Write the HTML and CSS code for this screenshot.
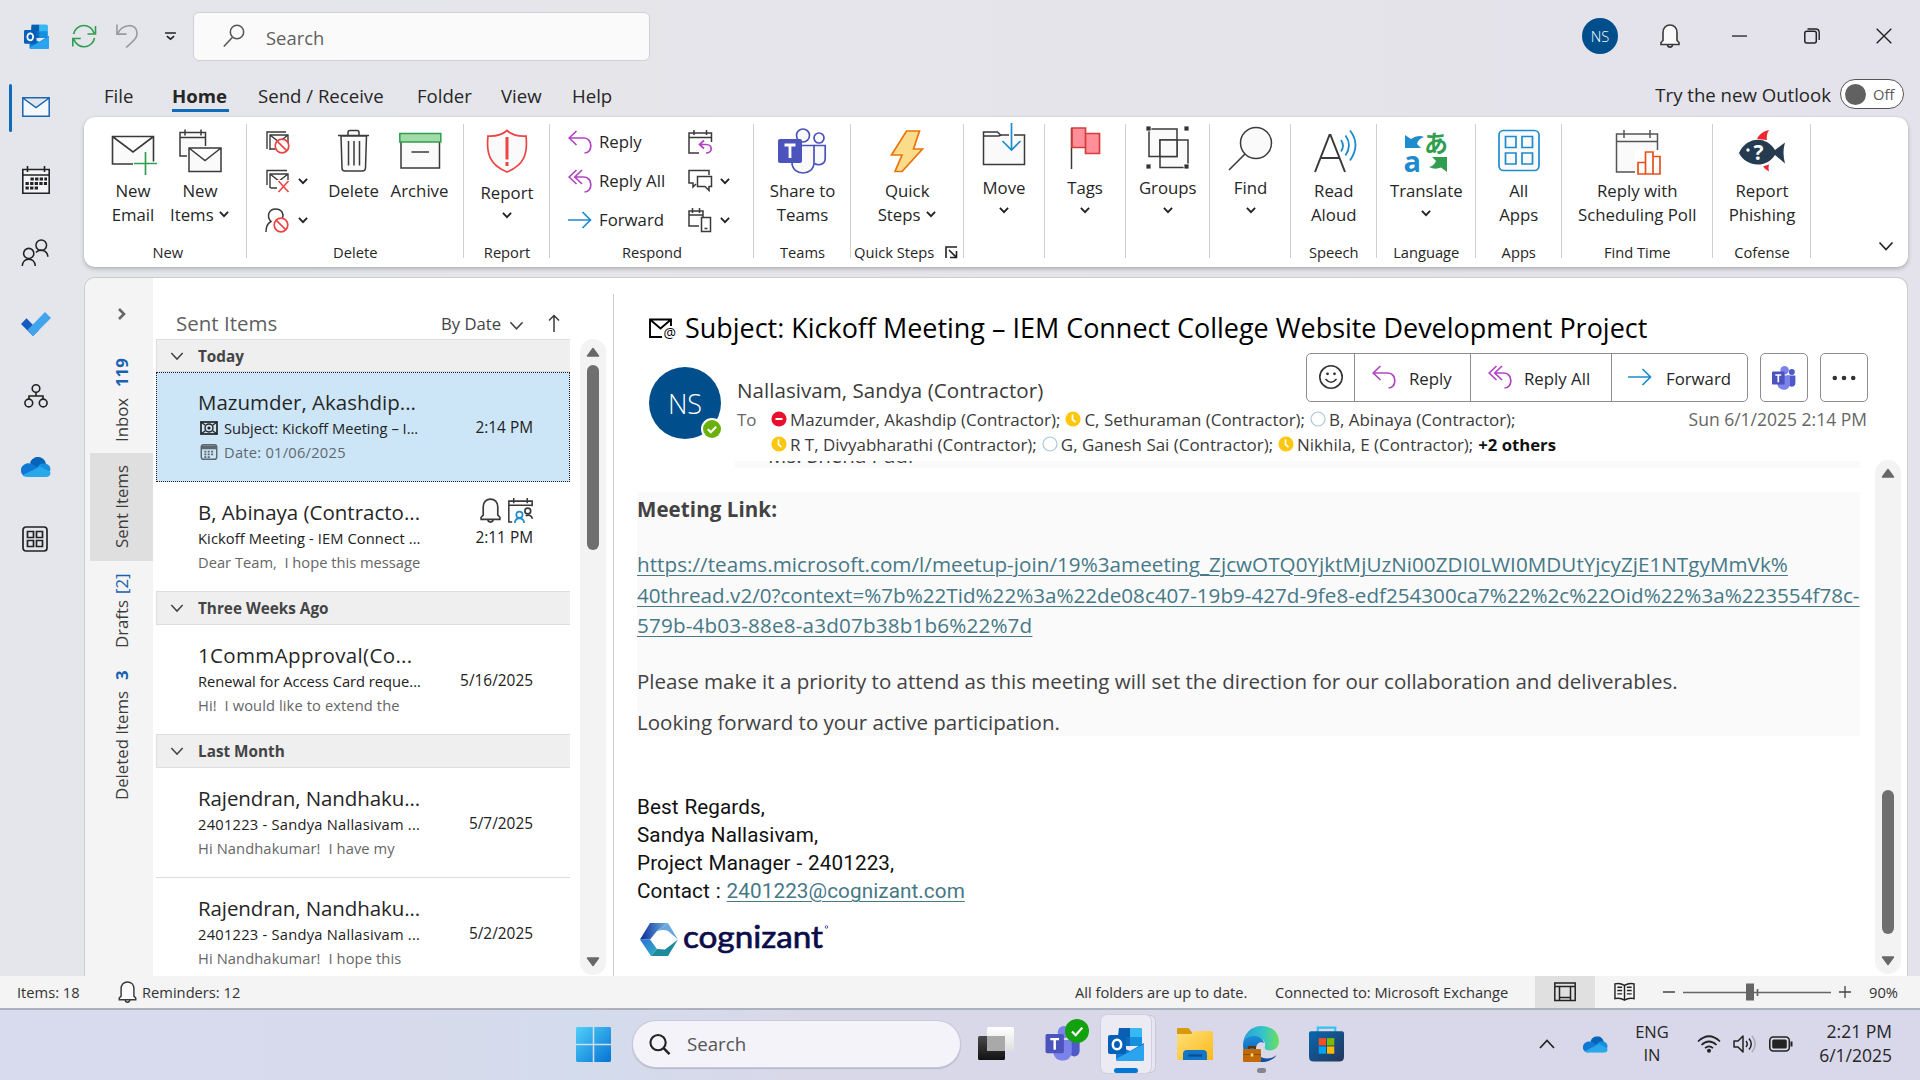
FILE: index.html
```html
<!DOCTYPE html>
<html lang="en">
<head>
<meta charset="utf-8">
<title>Sent Items - Outlook</title>
<link rel="stylesheet" href="styles.css">
</head>
<body>
<svg class="defs" aria-hidden="true">
  <defs>
    <linearGradient id="edgeTop" x1="0" y1="0" x2="1" y2="0"><stop offset="0" stop-color="#2a9fdd"/><stop offset=".55" stop-color="#34c4c9"/><stop offset="1" stop-color="#6be05a"/></linearGradient>
    <linearGradient id="edgeLow" x1="0" y1="0" x2="0" y2="1"><stop offset="0" stop-color="#1b8fdc"/><stop offset="1" stop-color="#114a9c"/></linearGradient>
    <linearGradient id="winGrad" x1="0" y1="0" x2="1" y2="1"><stop offset="0" stop-color="#50d0fb"/><stop offset="1" stop-color="#0573d3"/></linearGradient>
    <linearGradient id="folderGrad" x1="0" y1="0" x2="1" y2="1"><stop offset="0" stop-color="#ffe07a"/><stop offset="1" stop-color="#fbb91a"/></linearGradient>
    <linearGradient id="storeGrad" x1="0" y1="0" x2="1" y2="1"><stop offset="0" stop-color="#0768b0"/><stop offset="1" stop-color="#26355a"/></linearGradient>
    <linearGradient id="darkGrad" x1="0" y1="0" x2="0" y2="1"><stop offset="0" stop-color="#4a4a4a"/><stop offset="1" stop-color="#111"/></linearGradient>
    <linearGradient id="lightGrad" x1="0" y1="0" x2="0" y2="1"><stop offset="0" stop-color="#fff"/><stop offset="1" stop-color="#dedede"/></linearGradient>
    <linearGradient id="cogA" x1="0" y1="0" x2="1" y2="0"><stop offset="0" stop-color="#0a2a94"/><stop offset="1" stop-color="#6fb6e6"/></linearGradient>
    <linearGradient id="cogB" x1="0" y1="0" x2="1" y2="1"><stop offset="0" stop-color="#2b6fd6"/><stop offset="1" stop-color="#2fb3c4"/></linearGradient>
    <symbol id="chev" viewBox="0 0 10 10"><path d="M1.6 3.2 5 6.800 8.400 3.200" fill="none" stroke="currentColor" stroke-width="1.550"/></symbol>
    <symbol id="chevThin" viewBox="0 0 16 16"><path d="M1.500 4.500 8 11.500 14.500 4.500" fill="none" stroke="currentColor" stroke-width="1.700"/></symbol>
    <symbol id="bell" viewBox="0 0 24 24"><path d="M3 20.500V18.500L5 16.500V8.500C5 4 8 1 12 1s7 3 7 7.500v8l2 2v2zM9.500 20.500c0 3.500 5 3.500 5 0" fill="#fafafa" stroke="#3a3a3a" stroke-width="1.600"/></symbol>
    <symbol id="reply" viewBox="0 0 24 24"><path d="M8.500 1 1.200 8l7.300 7M1.200 8H16c9 0 9 15 .5 15" fill="none" stroke="#b146c2" stroke-width="1.700"/></symbol>
    <symbol id="replyAll" viewBox="0 0 24 24"><path d="M8.500 1 1.200 8l7.300 7M14 1 6.800 8l7.200 7M7 8h9c9 0 9 15 .5 15" fill="none" stroke="#b146c2" stroke-width="1.700"/></symbol>
    <symbol id="forward" viewBox="0 0 24 24"><path d="M0 12h22.500M14.500 4l8 8-8 8" fill="none" stroke="#1e8bcd" stroke-width="1.700"/></symbol>
    <symbol id="outlook" viewBox="0 0 36 34"><path d="M11 1h21q2 0 2 2v16H10z" fill="#28a8ea"/><path d="M11 1h11v9H10z" fill="#0a5fb0"/><path d="M22 1h10q2 0 2 2v7H22z" fill="#36b9f2"/><path d="M22 10h12v9H22z" fill="#1490df"/><path d="M10 10h12v9H10z" fill="#0f6cbd"/><path d="M8 18l14 6 14-8v16q0 2-2 2H10q-2 0-2-2z" fill="#1079d4"/><path d="M8 32 36 17v15q0 2-2 2H10q-2 0-2-2z" fill="#2aa4ee"/><rect y="8" width="18" height="19" rx="2" fill="#0560b8"/><ellipse cx="9" cy="17.500" rx="4.200" ry="4.800" fill="none" stroke="#fff" stroke-width="2.500"/></symbol>
    <symbol id="cloud" viewBox="0 0 30 20"><path d="M9 6c3-8 14-8 16 1l-8 6z" fill="#0364b8"/><path d="M1 17C-3 11 4 4 11 7l10 6-15 6.500Q2.500 20 1 17z" fill="#0f78d4"/><path d="M18 8c7-4 13 1 11 6l-4 4-10-6z" fill="#1490df"/><path d="M2 18 19 9.500l10 5c1.500 3-1 5.500-4 5.500H7q-3 0-5-2z" fill="#28a8ea"/></symbol>
    <symbol id="teams" viewBox="0 0 40 40"><circle cx="33" cy="10" r="5" fill="#5059c9"/><circle cx="21" cy="7" r="7" fill="#7b83eb"/><path d="M24 16h15v12c0 9-12 9-12 0z" fill="#5059c9"/><path d="M9 16h21v13c0 14-21 14-21 0z" fill="#7b83eb"/><rect x="0" y="9" width="21" height="22" rx="2" fill="#4b53bc"/><path d="M5.500 15h10M10.500 15v12" stroke="#fff" stroke-width="2.800"/></symbol>
    <symbol id="ban" viewBox="0 0 16 16"><circle cx="8" cy="8" r="6.800" fill="#fff" stroke="#ee4444" stroke-width="1.700"/><path d="M3.300 3.300l9.400 9.400" stroke="#ee4444" stroke-width="1.700"/></symbol>
    <symbol id="away" viewBox="0 0 16 16"><circle cx="8" cy="8" r="7.600" fill="#fdc70f"/><path d="M7.500 3.500v5.200l3 2.300" fill="none" stroke="#fff" stroke-width="1.700"/></symbol>
    <symbol id="offline" viewBox="0 0 16 16"><circle cx="8" cy="8" r="7" fill="#fff" stroke="#a9c8d8" stroke-width="1.200"/></symbol>
  </defs>
</svg>

<header class="titlebar">
  <svg class="i-outlook" viewBox="0 0 36 34" preserveAspectRatio="none"><use href="#outlook"/></svg>
  <svg class="i-sync" viewBox="0 0 24 24"><path d="M1.500 10A10.600 10.600 0 0 1 22 9M22.500 14A10.600 10.600 0 0 1 2 15.500M23.500 2v8h-8M.800 22.500V14.500h8" fill="none" stroke="#2f9e4f" stroke-width="1.600"/></svg>
  <svg class="i-undo" viewBox="0 0 24 24"><path d="M1 0v10h10M1.500 10C6-1 22-2 22 9c0 6-5 9-11.500 15" fill="none" stroke="#9a9a9e" stroke-width="1.700"/></svg>
  <svg class="i-more" viewBox="0 0 12 10"><path d="M0 1h12M2 4.500 6 8l4-3.500" fill="none" stroke="#222" stroke-width="1.700"/></svg>
  <div class="search">
    <svg width="22" height="24" viewBox="0 0 22 24"><circle cx="14" cy="8" r="6.700" fill="none" stroke="#555" stroke-width="1.500"/><path d="M9.500 13.200.800 22.500" stroke="#555" stroke-width="1.500"/></svg>
    <span>Search</span>
  </div>
  <div class="me">NS</div>
  <svg class="i-bell" viewBox="0 0 24 24"><use href="#bell"/></svg>
  <svg class="i-min" viewBox="0 0 16 16"><path d="M0 7.500h16" stroke="#222" stroke-width="1.400"/></svg>
  <svg class="i-max" viewBox="0 0 16 16"><rect x=".8" y="3.300" width="11.500" height="11.700" rx="2" fill="none" stroke="#222" stroke-width="1.500"/><path d="M3.500 1h8q3.700 0 3.700 3.700V12" fill="none" stroke="#222" stroke-width="1.400"/></svg>
  <svg class="i-close" viewBox="0 0 16 16"><path d="M.700.700l14.600 14.600M15.300.700.700 15.300" stroke="#222" stroke-width="1.400"/></svg>
</header>

<div class="window">
  <nav class="rail">
    <div class="rail-mark"></div>
    <svg class="r1" viewBox="0 0 28 20"><path d="M.800.800h26.400v18.400H.800zM.800 1l13.200 9.500L27.200 1" fill="#f4f8fc" stroke="#1a66b0" stroke-width="1.500"/></svg>
    <svg class="r2" viewBox="0 0 28 28"><path d="M.800 3.500h26.400v23.700H.800zM.800 9h26.400M5.500 0v6M22.500 0v6" fill="#f4f4f6" stroke="#222" stroke-width="1.600"/><path d="M8.500 13h16.500M3.500 17.500h21.500M3.500 22h13" stroke="#222" stroke-width="3" stroke-dasharray="3.300 1.300"/></svg>
    <svg class="r3" viewBox="0 0 28 28"><g fill="none" stroke="#222" stroke-width="1.600"><circle cx="20.500" cy="6.500" r="5.500"/><circle cx="7.500" cy="15" r="5.300"/><path d="M.800 28c.5-9.500 13-9.500 13.500 0M15 14c4-4.500 12-2.500 12.300 4.500"/></g></svg>
    <svg class="r4" viewBox="0 0 30 24"><path d="M0 12 5.500 6.200 12 13 18 18 12 24z" fill="#185abd"/><path d="M12 24 6.500 18 24 0l6 6z" fill="#41a5ee"/></svg>
    <svg class="r5" viewBox="0 0 24 24"><g fill="none" stroke="#222" stroke-width="1.600"><circle cx="12" cy="4.500" r="3.800"/><circle cx="4.800" cy="19" r="3.900"/><circle cx="19.200" cy="19" r="3.900"/><path d="M12 8.500V12M5 15v-3h14v3"/></g></svg>
    <svg class="r6" viewBox="0 0 30 20"><use href="#cloud"/></svg>
    <svg class="r7" viewBox="0 0 26 26"><g fill="none" stroke="#222" stroke-width="1.700"><rect x="1" y="1" width="24" height="24" rx="3"/><path d="M5.500 5.500h6v6h-6zM14.500 5.500h6v6h-6zM5.500 14.500h6v6h-6zM14.500 14.500h6v6h-6z"/></g></svg>
  </nav>

  <div class="content">
    <div class="tabs">
      <span class="tab t-file">File</span><span class="tab t-home">Home</span><span class="tab t-send">Send / Receive</span><span class="tab t-folder">Folder</span><span class="tab t-view">View</span><span class="tab t-help">Help</span>
      <span class="try">Try the new Outlook</span>
      <span class="toggle"><i></i>Off</span>
    </div>

    <section class="ribbon">
      <div class="group g-new">
        <div class="tools">
          <div class="btn"><svg viewBox="0 0 48 48"><path d="M3.500 10.500h41v27.500h-41zM3.500 10.500 24 26 44.500 10.500" fill="#fafafa" stroke="#3a3a3a" stroke-width="1.600"/><path d="M24 38h24M37 27v10" stroke="#fff" stroke-width="5"/><path d="M25 37.500h23M36.500 26v23" stroke="#2f9e4f" stroke-width="1.700"/></svg><b>New<br>Email</b></div>
          <div class="btn"><svg viewBox="0 0 48 48"><path d="M4 6.500h25.500V30H4zM4 11.500h25.500M9 3.500v6M25 3.500v6" fill="#fafafa" stroke="#3a3a3a" stroke-width="1.500"/><path d="M11 20h34v26H11z" fill="#fff"/><path d="M13 22h32v23.500H13zM13 22l16 12.500L45 22" fill="#fafafa" stroke="#3a3a3a" stroke-width="1.500"/></svg><b>New<br>Items <svg class="ch"><use href="#chev"/></svg></b></div>
        </div>
        <label>New</label>
      </div>
      <div class="group g-delete">
        <div class="tools">
          <div class="rows">
            <div><svg viewBox="0 0 24 24"><path d="M2 19V2h19M5 20V5h18v14H5.500M5 5l9 7 9-7" fill="none" stroke="#3a3a3a" stroke-width="1.400"/><use href="#ban" x="9" y="8" width="16" height="16"/></svg></div>
            <div><svg viewBox="0 0 24 24"><path d="M2 16V1.500h20M5 19V5h18v14H5.500M5 5l9 7 9-7" fill="none" stroke="#3a3a3a" stroke-width="1.400"/><path d="M12 11h12v13H12z" fill="#fff"/><path d="M13.500 12l10 11M23.500 12l-10 11" stroke="#ee4444" stroke-width="1.600"/></svg><svg class="ch"><use href="#chev"/></svg></div>
            <div><svg viewBox="0 0 24 24"><path d="M1 24c0-7 2-9 5-10.500C1 8 4 1 10.500 1S19 6 17.500 10" fill="none" stroke="#3a3a3a" stroke-width="1.500"/><use href="#ban" x="8" y="9" width="16" height="16"/></svg><svg class="ch"><use href="#chev"/></svg></div>
          </div>
          <div class="btn"><svg viewBox="0 0 48 48"><path d="M11 10h25.500l-1 32q-.2 3-3 3h-17.500q-3 0-3-3zM8 9.500h31M18 9V6.500q0-2 2-2h7q2 0 2 2V9M18.500 15v24.500M24 15v24.500M29.500 15v24.500" fill="#fafafa" stroke="#3a3a3a" stroke-width="1.500"/></svg><b>Delete</b></div>
          <div class="btn"><svg viewBox="0 0 48 48"><path d="M5 15h38.500v27H5z" fill="#fafafa" stroke="#3a3a3a" stroke-width="1.500"/><path d="M3.800 7.500h41v8.500h-41z" fill="#a0dba8" stroke="#2f9e4f" stroke-width="1.500"/><path d="M15.500 26h17.500" stroke="#3a3a3a" stroke-width="1.500"/></svg><b>Archive</b></div>
        </div>
        <label>Delete</label>
      </div>
      <div class="group g-report">
        <div class="tools"><div class="btn low"><svg viewBox="0 0 48 48"><path d="M24 2.500c5 4.500 11 6 19 5.500C45 26 41 37 24 44 7 37 3 26 5 8c8 .5 14-1 19-5.500z" fill="#fafafa" stroke="#ee4444" stroke-width="1.700"/><path d="M24 9v22.500M24 34v4" stroke="#ee4444" stroke-width="3"/></svg><b>Report</b><svg class="ch"><use href="#chev"/></svg></div></div>
        <label>Report</label>
      </div>
      <div class="group g-respond">
        <div class="tools">
          <div class="rows named">
            <div><svg><use href="#reply"/></svg>Reply</div>
            <div><svg><use href="#replyAll"/></svg>Reply All</div>
            <div><svg><use href="#forward"/></svg>Forward</div>
          </div>
          <div class="rows">
            <div><svg viewBox="0 0 24 24"><path d="M11 23H1V3h22.500v9M1 7.500h22.500M6 0v5M18.500 0v5" fill="none" stroke="#3a3a3a" stroke-width="1.500"/><path d="M16 10.500 11.500 14.500l4.500 4M12 14.500h6c7 0 7 8.500 0 8.500" fill="none" stroke="#b146c2" stroke-width="1.700"/></svg></div>
            <div><svg viewBox="0 0 24 24"><path d="M8 15 5 18v-4H1V1.500h20V6M9.500 7.500H23.500v10H21v4l-4-4H9.500z" fill="none" stroke="#3a3a3a" stroke-width="1.500"/></svg><svg class="ch"><use href="#chev"/></svg></div>
            <div><svg viewBox="0 0 24 24"><path d="M11 18H1V3h14v6M1 7h14M4.500 0v5M11.500 0v5" fill="none" stroke="#3a3a3a" stroke-width="1.500"/><rect x="13.500" y="9.500" width="9" height="14" fill="#fff" stroke="#3a3a3a" stroke-width="1.500"/><path d="M16.500 20.500h3" stroke="#3a3a3a" stroke-width="1.500"/></svg><svg class="ch"><use href="#chev"/></svg></div>
          </div>
        </div>
        <label>Respond</label>
      </div>
      <div class="group g-teams">
        <div class="tools"><div class="btn"><svg viewBox="0 0 48 48"><g fill="#fafafa" stroke="#4b53bc" stroke-width="1.700"><circle cx="25" cy="9.500" r="6.500"/><circle cx="41" cy="12" r="5"/><path d="M36 19.500h11.200v13c0 7-8 7-10.500 5"/><path d="M14 19.500h22v17c0 14-22 14-22 0z"/></g><rect y="13" width="24" height="24" rx="2" fill="#4b53bc"/><path d="M6.500 19h11M12 19v13" stroke="#fff" stroke-width="2.800"/></svg><b>Share to<br>Teams</b></div></div>
        <label>Teams</label>
      </div>
      <div class="group g-quick">
        <div class="tools"><div class="btn"><svg viewBox="0 0 48 48"><path d="M23.500 5H36.500l-6 18h9L19 45.500h-7L19 29H8.500z" fill="#fbdc8b" stroke="#e8750c" stroke-width="1.700"/></svg><b>Quick<br>Steps <svg class="ch"><use href="#chev"/></svg></b></div></div>
        <label>Quick Steps <svg width="13" height="13" viewBox="0 0 13 13"><path d="M1 12V1h11M4 4l7 7M11.500 5v6.500H5" fill="none" stroke="#222" stroke-width="1.600"/></svg></label>
      </div>
      <div class="group g-move">
        <div class="tools"><div class="btn up"><svg viewBox="0 0 48 48"><path d="M3.500 10V9h14l3 3h24v29.500h-41zM3.500 13h15l3-1" fill="#fafafa" stroke="#3a3a3a" stroke-width="1.500"/><path d="M31.500 0v27" stroke="#fff" stroke-width="5"/><path d="M31.500 0v27M22.500 18l9 9 9-9" fill="none" stroke="#1e8bcd" stroke-width="1.700"/></svg><b>Move</b><svg class="ch"><use href="#chev"/></svg></div></div>
      </div>
      <div class="group g-tags">
        <div class="tools"><div class="btn up"><svg viewBox="0 0 48 48"><path d="M10.500 5v41" stroke="#3a3a3a" stroke-width="1.500"/><path d="M11 5h13.500v19.500H11zM24.500 10.500H38.500V30.500H24.500z" fill="#ff9099" stroke="#d83b3b" stroke-width="1.700"/></svg><b>Tags</b><svg class="ch"><use href="#chev"/></svg></div></div>
      </div>
      <div class="group g-groups">
        <div class="tools"><div class="btn up"><svg viewBox="0 0 48 48"><path d="M6 6h28v27.500H6zM17 17h28v27.500H17z" fill="#fafafa" stroke="#3a3a3a" stroke-width="1.500"/><path d="M17 17h17v16.500H17z" fill="#fafafa" stroke="#3a3a3a" stroke-width="1.500"/><path d="M3 3h5v5H3zM41 3h5v5h-5zM3 41h5v5H3zM41 41h5v5h-5z" fill="#333" stroke="#fff" stroke-width=".8"/></svg><b>Groups</b><svg class="ch"><use href="#chev"/></svg></div></div>
      </div>
      <div class="group g-find">
        <div class="tools"><div class="btn up"><svg viewBox="0 0 48 48"><circle cx="30" cy="20" r="15.500" fill="#fafafa" stroke="#3a3a3a" stroke-width="1.500"/><path d="M19 31 3 47" stroke="#3a3a3a" stroke-width="1.600"/></svg><b>Find</b><svg class="ch"><use href="#chev"/></svg></div></div>
      </div>
      <div class="group g-speech">
        <div class="tools"><div class="btn"><svg viewBox="0 0 48 48"><path d="M5 46 19.500 9h1L35 46M10.500 32h19" fill="none" stroke="#3a3a3a" stroke-width="2"/><path d="M31 14q4 6 0 11.500M35.500 9.500q7 9.500 0 20M40 4.500q11 14 0 30" fill="none" stroke="#1e8bcd" stroke-width="1.800"/></svg><b>Read<br>Aloud</b></div></div>
        <label>Speech</label>
      </div>
      <div class="group g-lang">
        <div class="tools"><div class="btn"><svg viewBox="0 0 48 48"><path d="M3 9l6 4q7-5 13-2-6 2-7 7l4 4H3z" fill="#1e8bcd"/><path d="M45 46V31H30l4 4q-2 5-7 6 6 3 12 .5z" fill="#2f9e4f"/><text x="1.500" y="46" class="gl-a">a</text><text x="22" y="25.500" class="gl-ja">あ</text></svg><b>Translate</b><svg class="ch"><use href="#chev"/></svg></div></div>
        <label>Language</label>
      </div>
      <div class="group g-apps">
        <div class="tools"><div class="btn"><svg viewBox="0 0 48 48"><g fill="#fafafa" stroke="#1e8bcd" stroke-width="1.700"><rect x="4" y="4.500" width="40" height="40" rx="4.500"/><path d="M10.500 10.500h10.500v11H10.500zM27 10.500h10.500v11H27zM10.500 27h10.500v11H10.500zM27 27h10.500v11H27z"/></g></svg><b>All<br>Apps</b></div></div>
        <label>Apps</label>
      </div>
      <div class="group g-poll">
        <div class="tools"><div class="btn"><svg viewBox="0 0 48 48"><path d="M3.500 8h41v38h-41zM3.500 15.500h41M11 4v8M37 4v8" fill="#fafafa" stroke="#555" stroke-width="1.500"/><path d="M22 24h27v25H22z" fill="#fff"/><path d="M25 36.500h7.500V48H25zM32.500 26H40v22h-7.500zM40 30.500h7V48h-7z" fill="#fff" stroke="#e8501c" stroke-width="1.700"/></svg><b>Reply with<br>Scheduling Poll</b></div></div>
        <label>Find Time</label>
      </div>
      <div class="group g-cof">
        <div class="tools"><div class="btn"><svg viewBox="0 0 48 48"><path d="M19 13Q22 6 31 4q-3 5-2 10zM25 40.500l6-2q-1 3 0 7-4-2-6-5z" fill="#f0262f"/><path d="M1 27C8 11 28 9 37 24l10-7.500q-3 10 0 21L37 29C28 43 8 41 1 27z" fill="#243b50"/><circle cx="10" cy="24" r="1.700" fill="#fff"/><text x="15.500" y="34" class="gl-q">?</text></svg><b>Report<br>Phishing</b></div></div>
        <label>Cofense</label>
      </div>
      <svg class="collapse" viewBox="0 0 16 16"><use href="#chevThin"/></svg>
    </section>

    <main class="panel">
      <aside class="folders">
        <svg class="expand" viewBox="0 0 10 12"><path d="M2 1l5 5-5 5" fill="none" stroke="#666" stroke-width="2.600"/></svg>
        <div class="fold f1"><span>Inbox</span><b>119</b></div>
        <div class="fold f2 on"><span>Sent Items</span></div>
        <div class="fold f3"><span>Drafts</span><em>[2]</em></div>
        <div class="fold f4"><span>Deleted Items</span><b>3</b></div>
      </aside>

      <section class="list">
        <div class="list-head"><span class="ttl">Sent Items</span><span class="sort">By Date</span><svg class="c" viewBox="0 0 16 16"><use href="#chevThin"/></svg><svg class="a" viewBox="0 0 12 18"><path d="M6 18V1.500M1 6.500l5-5 5 5" fill="none" stroke="#3a3a3a" stroke-width="1.500"/></svg></div>
        <div class="list-body">
          <div class="items">
            <div class="sec"><svg viewBox="0 0 16 16"><use href="#chevThin"/></svg>Today</div>
            <article class="mail sel">
              <h3>Mazumder, Akashdip...</h3>
              <p class="sub"><svg viewBox="0 0 18 14"><rect x="1" y="1" width="16" height="12" fill="none" stroke="#222" stroke-width="1.700"/><path d="M1 1l16 12M17 1 1 13" stroke="#222" stroke-width="1.200"/><circle cx="9" cy="7" r="4" fill="#cce4f7" stroke="#222" stroke-width="1.400"/><circle cx="9" cy="7" r="1.600" fill="#222"/></svg><span>Subject: Kickoff Meeting – I...</span><time>2:14 PM</time></p>
              <p class="pre"><svg viewBox="0 0 18 17"><rect x=".8" y=".8" width="16.400" height="15.400" rx="2.500" fill="none" stroke="#5d6770" stroke-width="1.600"/><path d="M1 3.500h16" stroke="#5d6770" stroke-width="4"/><path d="M4 8h10.500M4 11h10.500M4 14h7" stroke="#5d6770" stroke-width="1.800" stroke-dasharray="2.200 1.400"/></svg><span class="dt">Date: 01/06/2025</span></p>
            </article>
            <article class="mail">
              <h3>B, Abinaya (Contracto...<span class="flags"><svg viewBox="0 0 24 24"><use href="#bell"/></svg><svg viewBox="0 0 24 24"><path d="M4 23H.800V3h22.400v5M.800 7h22.400M5.500 0v5M18.500 0v5" fill="none" stroke="#3a3a3a" stroke-width="1.500"/><g fill="none" stroke-width="1.600"><circle cx="19" cy="12.500" r="2.800" stroke="#3a3a3a"/><path d="M17 17q5-2 6.500 3" stroke="#3a3a3a"/><circle cx="11" cy="16" r="3" stroke="#1e8bcd"/><path d="M6.500 24c.5-6 8.500-6 9 0" stroke="#1e8bcd"/></g></svg></span></h3>
              <p class="sub"><span class="kick">Kickoff Meeting - IEM Connect ...</span><time>2:11 PM</time></p>
              <p class="pre">Dear Team,&nbsp; I hope this message</p>
            </article>
            <div class="sec"><svg viewBox="0 0 16 16"><use href="#chevThin"/></svg>Three Weeks Ago</div>
            <article class="mail">
              <h3 class="wide">1CommApproval(Co...</h3>
              <p class="sub"><span>Renewal for Access Card reque...</span><time>5/16/2025</time></p>
              <p class="pre loose">Hi!&nbsp; I would like to extend the</p>
            </article>
            <div class="sec"><svg viewBox="0 0 16 16"><use href="#chevThin"/></svg>Last Month</div>
            <article class="mail line">
              <h3 class="tight">Rajendran, Nandhaku...</h3>
              <p class="sub"><span class="num">2401223 - Sandya Nallasivam ...</span><time>5/7/2025</time></p>
              <p class="pre loose">Hi Nandhakumar!&nbsp; I have my</p>
            </article>
            <article class="mail">
              <h3 class="tight">Rajendran, Nandhaku...</h3>
              <p class="sub"><span class="num">2401223 - Sandya Nallasivam ...</span><time>5/2/2025</time></p>
              <p class="pre loose">Hi Nandhakumar!&nbsp; I hope this</p>
            </article>
          </div>
          <div class="scroll s-list"><svg viewBox="0 0 14 10"><path d="M7 1.500 12.500 9h-11z" fill="#686868" stroke="#686868" stroke-width="1.500" stroke-linejoin="round"/></svg><i></i><svg viewBox="0 0 14 10"><path d="M7 8.500 12.500 1h-11z" fill="#686868" stroke="#686868" stroke-width="1.500" stroke-linejoin="round"/></svg></div>
        </div>
      </section>

      <section class="reader">
        <h1><svg viewBox="0 0 28 22"><path d="M13 19H1V1.500h21V8M1 1.500l10.500 9 10.500-9" fill="none" stroke="#000" stroke-width="1.900"/><text x="14.500" y="20" class="at">@</text></svg>Subject: Kickoff Meeting – IEM Connect College Website Development Project</h1>
        <div class="head">
          <div class="avatar">NS<svg viewBox="0 0 22 22"><circle cx="11" cy="11" r="11" fill="#fff"/><circle cx="11" cy="11" r="9" fill="#6bb10b"/><path d="M6.800 11.300l3 3 5.400-5.600" fill="none" stroke="#fff" stroke-width="2"/></svg></div>
          <div class="meta">
            <div class="from"><span>Nallasivam, Sandya (Contractor)</span>
              <div class="acts">
                <div class="bar">
                  <span class="b1"><svg viewBox="0 0 24 24"><circle cx="12" cy="12" r="11.200" fill="#fff" stroke="#333" stroke-width="1.600"/><circle cx="8.500" cy="8.800" r="1.400" fill="#333"/><circle cx="15.500" cy="8.800" r="1.400" fill="#333"/><path d="M6.500 14q5.500 6.500 11 0" fill="none" stroke="#333" stroke-width="1.600"/></svg></span>
                  <span class="b2"><svg viewBox="0 0 24 24"><use href="#reply"/></svg>Reply</span>
                  <span class="b3"><svg viewBox="0 0 24 24"><use href="#replyAll"/></svg>Reply All</span>
                  <span class="b4"><svg viewBox="0 0 24 24"><use href="#forward"/></svg>Forward</span>
                </div>
                <div class="sq"><svg viewBox="0 0 40 40"><use href="#teams"/></svg></div>
                <div class="sq"><svg viewBox="0 0 24 24"><circle cx="2.800" cy="12" r="2.300" fill="#333"/><circle cx="12" cy="12" r="2.300" fill="#333"/><circle cx="21.200" cy="12" r="2.300" fill="#333"/></svg></div>
              </div>
            </div>
            <div class="to">
              <span class="lbl">To</span>
              <div class="rcpts">
                <div><svg viewBox="0 0 16 16"><circle cx="8" cy="8" r="7.600" fill="#e8112d"/><path d="M4.500 8h7" stroke="#fff" stroke-width="2"/></svg><span>Mazumder, Akashdip (Contractor);</span><svg><use href="#away"/></svg><span>C, Sethuraman (Contractor);</span><svg><use href="#offline"/></svg><span>B, Abinaya (Contractor);</span></div>
                <div><svg><use href="#away"/></svg><span>R T, Divyabharathi (Contractor);</span><svg><use href="#offline"/></svg><span>G, Ganesh Sai (Contractor);</span><svg><use href="#away"/></svg><span>Nikhila, E (Contractor);</span><b>+2 others</b></div>
              </div>
              <time>Sun 6/1/2025 2:14 PM</time>
            </div>
          </div>
        </div>
        <div class="bodywrap">
          <div class="msg">
            <div class="cut"><span>Ms. Sneha Paul</span></div>
            <div class="shade">
              <p class="ml">Meeting Link:</p>
              <p class="lk"><a class="l1">https://teams.microsoft.com/l/meetup-join/19%3ameeting_ZjcwOTQ0YjktMjUzNi00ZDI0LWI0MDUtYjcyZjE1NTgyMmVk%</a><br><a>40thread.v2/0?context=%7b%22Tid%22%3a%22de08c407-19b9-427d-9fe8-edf254300ca7%22%2c%22Oid%22%3a%223554f78c-</a><br><a class="l3">579b-4b03-88e8-a3d07b38b1b6%22%7d</a></p>
              <p class="pl">Please make it a priority to attend as this meeting will set the direction for our collaboration and deliverables.</p>
              <p>Looking forward to your active participation.</p>
            </div>
            <div class="sig">Best Regards,<br>Sandya Nallasivam,<br>Project Manager - 2401223,<br>Contact&nbsp;: <a>2401223@cognizant.com</a></div>
            <svg class="logo" viewBox="0 0 190 38"><path d="M10 1h18L17 9 10 17.500 0 17.500z" fill="url(#cogA)"/><path d="M0 17.500h10L17 27l-6 7z" fill="url(#cogB)"/><path d="M28 1l10 16.500L28 9q-4-2-11 0z" fill="#6aa8dc"/><path d="M11 34l6-7 8 .5L38 17.500 28 34z" fill="#1f8a9c"/><text x="43" y="26" class="cog" textLength="140" lengthAdjust="spacingAndGlyphs">cognizant</text><circle cx="186.500" cy="5" r="1.300" fill="none" stroke="#1a1a5e" stroke-width=".7"/></svg>
          </div>
          <div class="scroll s-msg"><svg viewBox="0 0 14 10"><path d="M7 1.500 12.500 9h-11z" fill="#686868" stroke="#686868" stroke-width="1.500" stroke-linejoin="round"/></svg><i></i><svg viewBox="0 0 14 10"><path d="M7 8.500 12.500 1h-11z" fill="#686868" stroke="#686868" stroke-width="1.500" stroke-linejoin="round"/></svg></div>
        </div>
      </section>
    </main>
  </div>
</div>

<footer class="status">
  <span class="st-items">Items: 18</span>
  <svg class="st-bell" viewBox="0 0 24 24"><use href="#bell"/></svg><span>Reminders: 12</span>
  <span class="st-all">All folders are up to date.</span><span class="st-conn">Connected to: Microsoft Exchange</span>
  <span class="st-view"><svg width="22" height="20" viewBox="0 0 22 20"><path d="M.800 1h20.400v17.500H.800zM.800 4.500h20.400M5.500 4.500v14M16.500 4.500v14M5.500 15.500h11" fill="none" stroke="#222" stroke-width="1.500"/></svg></span>
  <svg class="st-book" viewBox="0 0 22 20"><path d="M11 3Q6 0 1 1.500v15.500Q6 15.500 11 18.500 16 15.500 21 17V1.500Q16 0 11 3zV19M3.500 5h5M3.500 8.500h5M3.500 12h5M13.500 5h5M13.500 8.500h5M13.500 12h5" fill="none" stroke="#222" stroke-width="1.500"/></svg>
  <svg class="st-zoom" viewBox="0 0 190 20"><path d="M0 10h12M176 10h12M182 4v12" stroke="#444" stroke-width="1.300"/><path d="M20 10.500h148M94.500 7v7" stroke="#666" stroke-width="1.700"/><rect x="83" y="1.500" width="8" height="17" fill="#666"/></svg>
  <span>90%</span>
</footer>

<footer class="taskbar">
  <svg class="k-start" viewBox="0 0 36 36"><path d="M1.500 0h15.700v17.200H0V1.500Q0 0 1.500 0zM18.800 0h15.700Q36 0 36 1.500v15.700H18.800zM0 18.800h17.200V36H1.500Q0 36 0 34.500zM18.800 18.800H36v15.700q0 1.500-1.500 1.500H18.800z" fill="url(#winGrad)"/></svg>
  <div class="k-search"><svg viewBox="0 0 22 22"><circle cx="9.500" cy="9.500" r="8" fill="none" stroke="#222" stroke-width="2.200"/><path d="M15.500 15.500l6 6" stroke="#222" stroke-width="2.600"/></svg><span>Search</span></div>
  <svg class="k-view" viewBox="0 0 36 34"><rect y="9" width="27" height="24" rx="1.500" fill="url(#darkGrad)"/><rect x="9" y="0" width="27" height="24" rx="1.500" fill="url(#lightGrad)"/><rect x="9" y="9" width="18" height="15" fill="#a9a9a9"/></svg>
  <svg class="k-teams" viewBox="0 0 44 42"><use href="#teams" x="0" y="7" width="36" height="35"/><circle cx="32" cy="12" r="12" fill="#13a10e"/><path d="M27 12.500l3.700 3.700 6.600-7.600" fill="none" stroke="#fff" stroke-width="2.200"/></svg>
  <div class="k-tile"><svg viewBox="0 0 36 34"><use href="#outlook"/></svg><i></i></div>
  <svg class="k-files" viewBox="0 0 36 34"><path d="M0 2Q0 1 1.500 1h10l4 5H34q2 0 2 2v6H0z" fill="#d99a0b"/><path d="M0 7h14l3-3h17q2 0 2 2v27H2q-2 0-2-2z" fill="url(#folderGrad)"/><path d="M6 33V27q0-4 4-4h16q4 0 4 4v6z" fill="#1375c8"/><path d="M11 28.500h14" stroke="#0a4d92" stroke-width="2.200"/></svg>
  <div class="k-edge"><svg viewBox="0 0 36 36"><path d="M0 19C0 8 8 0 18.500 0 29 0 36 7 36 15c0 6-4 9.500-9 9.500-4 0-6-1.500-5-4 1-5-3-9-9-9-6 0-11 2-13 7.500z" fill="url(#edgeTop)"/><path d="M0 19c1-7 6-9 12-9 4 0 8 3 9 7-4-2-8 1-8 6 0 6 5 9.500 11 9.500 4 0 7-1.500 9.500-3.500C31 33.500 25 36 18 36 7 36 0 28 0 19z" fill="url(#edgeLow)"/><rect x="0" y="23" width="18" height="13" rx="1" fill="#c26a08"/><path d="M6 23v-2h6v2" fill="none" stroke="#5c3206" stroke-width="1.800"/><path d="M0 28.500h18" stroke="#93500a" stroke-width="1.200"/><rect x="7.700" y="27.500" width="2.600" height="3" fill="#ffe07a"/></svg><i></i></div>
  <svg class="k-store" viewBox="0 0 36 36"><path d="M9 7V1.200h18V7" fill="none" stroke="#35c1f1" stroke-width="2.200"/><path d="M0 7Q0 5 2 5h32q2 0 2 2v24q0 5-5 5H5q-5 0-5-5z" fill="url(#storeGrad)"/><path d="M10 12h7.500v7.500H10z" fill="#f25022"/><path d="M18.500 12H26v7.500h-7.500z" fill="#7fba00"/><path d="M10 20.500h7.500V28H10z" fill="#00a4ef"/><path d="M18.500 20.500H26V28h-7.500z" fill="#ffb900"/></svg>
  <svg class="k-up" viewBox="0 0 16 10"><path d="M1 9l7-7.500L15 9" fill="none" stroke="#222" stroke-width="1.700"/></svg>
  <svg class="k-cloud" viewBox="0 0 30 20"><use href="#cloud"/></svg>
  <div class="k-lang">ENG<br>IN</div>
  <svg class="k-wifi" viewBox="0 0 24 18"><g fill="none" stroke="#222" stroke-width="1.700"><path d="M1 6.500q11-10.500 22 0M4.500 10q7.500-7 15 0M8 13.200q4-3.500 8 0"/></g><circle cx="12" cy="15.800" r="2" fill="#222"/></svg>
  <svg class="k-vol" viewBox="0 0 24 18"><path d="M1 6h4l5-5v16l-5-5H1z" fill="none" stroke="#222" stroke-width="1.500" stroke-linejoin="round"/><path d="M13 6q2.500 3 0 6M16 3.500q4.500 5.500 0 11" fill="none" stroke="#222" stroke-width="1.500"/><path d="M19 1q6.500 8 0 16" fill="none" stroke="#aaaab5" stroke-width="1.500"/></svg>
  <svg class="k-bat" viewBox="0 0 24 16"><rect x=".8" y="1" width="19.500" height="14" rx="3.500" fill="none" stroke="#222" stroke-width="1.600"/><rect x="3.200" y="3.500" width="14.600" height="9" rx="1.500" fill="#222"/><path d="M22.500 5.500v5" stroke="#222" stroke-width="2"/></svg>
  <div class="k-clock">2:21 PM<br>6/1/2025</div>
</footer>
</body>
</html>
```
FILE: styles.css
```css
* { box-sizing: border-box; }
body { margin: 0; width: 1920px; height: 1080px; overflow: hidden; display: flex; flex-direction: column; font-family: "Open Sans", "Noto Sans", sans-serif; color: #262626; background: linear-gradient(90deg, #e4e6eb, #e5e5ea 30%, #e4e2ea); white-space: nowrap; }
svg { flex: none; display: block; overflow: visible; }
p, h1, h3 { margin: 0; font-weight: 400; }
i, em { font-style: normal; }
.defs { width: 0; height: 0; position: absolute; }

/* title bar */
.titlebar { height: 72px; flex: none; display: flex; align-items: center; }
.i-outlook { width: 25px; height: 25px; margin-left: 24px; }
.i-sync { width: 24px; height: 24px; margin-left: 23px; }
.i-undo { width: 23px; height: 24px; margin-left: 20px; }
.i-more { width: 11px; height: 9px; margin-left: 26px; }
.search { width: 457px; height: 49px; margin-left: 17px; padding-left: 29px; display: flex; align-items: center; gap: 21px; background: #fafafa; border: 1px solid #d0d0d5; border-radius: 6px; font-size: 18.400px; color: #5f5f5f; }
.search svg { margin-bottom: 1px; }
.search span { padding-top: 2px; }
.me { width: 36px; height: 36px; margin-left: 932px; border-radius: 50%; background: #004e8c; color: #fff; font-size: 14.700px; font-weight: 300; display: flex; align-items: center; justify-content: center; }
.i-bell { width: 24px; height: 24px; margin-left: 40px; }
.i-min { width: 15px; height: 15px; margin-left: 50px; }
.i-max { width: 16px; height: 16px; margin-left: 57px; }
.i-close { width: 16px; height: 16px; margin-left: 56px; }

/* left rail */
.window { height: 904px; flex: none; display: flex; }
.rail { width: 84px; flex: none; display: flex; flex-direction: column; align-items: flex-start; }
.rail-mark { width: 3px; height: 48px; margin: 12px 0 0 9px; border-radius: 2px; background: #0f6cbd; }
.r1 { width: 28px; height: 20px; margin: -35px 0 0 22px; }
.r2 { width: 28px; height: 28px; margin: 49px 0 0 22px; }
.r3 { width: 28px; height: 27px; margin: 45px 0 0 21px; }
.r4 { width: 30px; height: 24px; margin: 46px 0 0 21px; }
.r5 { width: 24px; height: 24px; margin: 48px 0 0 24px; }
.r6 { width: 30px; height: 20px; margin: 49px 0 0 21px; }
.r7 { width: 26px; height: 26px; margin: 49px 0 0 22px; }

/* tabs */
.content { width: 1836px; flex: none; display: flex; flex-direction: column; }
.tabs { height: 45px; flex: none; display: flex; align-items: flex-start; font-size: 18.600px; line-height: 28px; padding-top: 10px; }
.tab { height: 30px; }
.t-file { margin-left: 20px; width: 68px; }
.t-home { width: 57px; font-weight: 700; border-bottom: 3px solid #0f6cbd; margin-right: 29px; }
.t-send { width: 159px; }
.t-folder { width: 84px; }
.t-view { width: 71px; }
.try { margin-left: auto; margin-right: 9px; margin-top: -1px; }
.toggle { width: 64px; height: 30px; margin: -3px 16px 0 0; border: 1.500px solid #555; border-radius: 15px; background: #fff; display: flex; align-items: center; padding-left: 4px; gap: 7px; font-size: 14.700px; color: #5a5a5a; }
.toggle i { width: 21px; height: 21px; border-radius: 50%; background: #616161; }

/* ribbon */
.ribbon { width: 1824px; height: 150px; flex: none; display: flex; background: #fff; border-radius: 11px; box-shadow: 0 2px 4px rgba(0,0,0,.22), 0 0 1px rgba(0,0,0,.2); }
.group { display: flex; flex-direction: column; flex: none; font-size: 16.800px; line-height: 24px; background: linear-gradient(#cfcfcf, #cfcfcf) right 7px / 1px 134px no-repeat; }
.group label { font-size: 14.700px; text-align: center; margin-top: -1px; }
.tools { height: 124px; display: flex; justify-content: center; }
.btn { display: flex; flex-direction: column; align-items: center; padding-top: 9px; text-align: center; }
.btn > svg { width: 48px; height: 48px; margin-bottom: 5px; }
.btn b { font-weight: 400; }
.btn.low { padding-top: 11px; }
.btn.up { padding-top: 6px; }
.btn.up > svg { margin-left: -1px; }
svg.ch, .btn > svg.ch { width: 12px; height: 12px; color: #222; display: inline-block; }
b svg.ch { vertical-align: 1px; }
.btn > svg.ch { margin: 4px 0; }
.rows { display: flex; flex-direction: column; padding-top: 5px; }
.rows > div { height: 39px; display: flex; align-items: center; gap: 7px; }
.rows > div > svg:first-child { width: 24px; height: 24px; }
.g-new { width: 162.500px; } .g-new .tools { justify-content: flex-start; padding-left: 25px; gap: 13px; }
.g-new label { padding-left: 5px; }
.g-new .btn { width: 48px; } .g-new .btn + .btn { width: 60px; }
.g-delete { width: 217.500px; } .g-delete .tools { justify-content: flex-start; padding-left: 18px; }
.g-delete .rows { width: 56px; } .g-delete .btn { width: 66px; } .g-delete .rows svg.ch { margin-left: 1px; }
.g-report { width: 86px; }
.g-respond { width: 204px; } .g-respond .tools { justify-content: flex-start; padding-left: 18px; }
.rows.named { width: 120px; }
.g-teams { width: 97px; }
.g-quick { width: 112.500px; } .g-quick label { display: flex; align-items: center; gap: 11px; padding-left: 3px; }
.g-move { width: 81px; } .g-tags { width: 81px; } .g-groups { width: 84.500px; } .g-find { width: 81px; }
.g-speech { width: 85.500px; } .g-lang { width: 99.500px; } .g-apps { width: 85.500px; } .g-poll { width: 151.500px; } .g-cof { width: 98px; }
.gl-a { font: 700 29px "Open Sans", sans-serif; fill: #1e8bcd; }
.gl-ja { font: 700 24px "Noto Sans CJK JP", sans-serif; fill: #2f9e4f; }
.gl-q { font: 700 21px "Open Sans", sans-serif; fill: #fff; }
.collapse { width: 16px; height: 16px; margin: 121px 0 0 67px; }

/* main panel */
.panel { width: 1824px; height: 699px; margin-top: 10px; border: 1px solid #cdcdcd; border-bottom: 0; border-radius: 11px 11px 0 0; background: #fff; display: flex; overflow: hidden; }
.folders { width: 68px; flex: none; background: #f4f4f4; display: flex; flex-direction: column; align-items: center; padding-left: 5px; }
.expand { width: 10px; height: 12px; margin: 30px 0 27px; }
.fold { width: 63px; writing-mode: vertical-rl; transform: rotate(180deg); display: flex; align-items: center; justify-content: center; gap: 11px; font-size: 16.800px; color: #3b3b3b; }
.fold span, .fold b, .fold em { margin-right: -1px; }
.fold b, .fold em { color: #1a61b0; }
.f1 { height: 106px; } .f2 { height: 108px; } .f3 { height: 99px; gap: 6px; } .f4 { height: 150px; }
.fold.on { background: #dfdfdf; }
.list { width: 460px; flex: none; padding-left: 3px; display: flex; flex-direction: column; }
.list-head { height: 61px; padding-top: 29px; display: flex; align-items: center; }
.ttl { font-size: 20.500px; color: #5f5f5f; margin-left: 20px; width: 265px; line-height: 30px; }
.sort { font-size: 16.700px; color: #444; width: 68px; }
.list-head .c { width: 15px; height: 15px; color: #444; margin-top: 4px; }
.list-head .a { width: 12px; height: 18px; margin-left: 24px; }
.list-body { display: flex; gap: 10px; height: 637px; }
.items { width: 414px; overflow: hidden; }
.sec { height: 34px; background: #efefef; border: 1px solid #dedede; border-right: 0; display: flex; align-items: center; gap: 14px; padding: 0 0 0 13px; font-size: 15.300px; font-weight: 700; color: #444; }
.sec svg { width: 14px; height: 14px; }
.sec:first-child { height: 33px; padding-top: 1px; }
.mail { height: 109px; padding: 16px 37px 0 42px; }
.mail.sel { background: #cde6f7; outline: 1px dotted #222; outline-offset: -1px; height: 110px; }
.mail.line { border-bottom: 1px solid #dcdcdc; height: 110px; }
.mail h3 { font-size: 20.500px; line-height: 28px; display: flex; justify-content: space-between; }
.mail h3.wide { letter-spacing: .35px; }
.mail h3.tight { letter-spacing: -.1px; }
.mail p { font-size: 14.700px; line-height: 24px; display: flex; align-items: center; color: #666; }
.mail p.sub { color: #222; }
.mail.sel .pre { color: #5f6870; }
.mail .kick { letter-spacing: .1px; }
.mail .num, .mail .dt { letter-spacing: .24px; }
.mail .loose { letter-spacing: .1px; }
.mail time { margin-left: auto; font-size: 15.400px; }
.mail p svg { width: 18px; height: 16px; margin: 0 6px 0 2px; }
.flags { display: flex; gap: 5px; align-items: center; margin-top: -4px; }
.flags svg { width: 25px; height: 25px; }
.scroll { background: #f3f3f3; border-radius: 13px; display: flex; flex-direction: column; align-items: center; }
.scroll i { background: #6f6f6f; border-radius: 6px; }
.scroll svg { width: 14px; height: 10px; }
.s-list { width: 26px; height: 636px; padding-top: 8px; }
.s-list i { width: 12px; height: 185px; margin: 8px 0 407px; }

/* reading pane */
.reader { width: 1294px; flex: none; padding-left: 24px; background: linear-gradient(#cfcfcf, #cfcfcf) left 16px / 1px 690px no-repeat; }
.reader h1 { font-size: 26.950px; line-height: 40px; color: #000; display: flex; align-items: center; padding: 30px 0 0 12px; gap: 8px; }
.reader h1 svg { width: 28px; height: 22px; margin-top: 2px; }
.at { font: 400 14px "Open Sans", sans-serif; }
.head { display: flex; height: 112px; padding-left: 12px; }
.avatar { width: 72px; height: 72px; margin-top: 19px; border-radius: 50%; background: #004e8c; color: #fff; font-size: 27px; font-weight: 300; display: flex; align-items: center; justify-content: center; position: relative; }
.avatar svg { position: absolute; width: 22px; height: 22px; right: -2px; bottom: -1px; }
.meta { width: 1130px; margin-left: 16px; padding-top: 5px; }
.from { display: flex; justify-content: space-between; height: 54px; }
.from > span { font-size: 20.550px; line-height: 28px; color: #3b3b3b; padding-top: 23px; letter-spacing: .04px; }
.acts { display: flex; gap: 12px; margin-right: -1px; }
.bar, .sq { height: 49px; border: 1.500px solid #8d8d8d; border-radius: 5px; display: flex; align-items: center; }
.sq { width: 48px; justify-content: center; }
.sq svg { width: 24px; height: 24px; }
.bar { width: 442px; font-size: 16.800px; }
.bar svg { width: 24px; height: 24px; margin-top: -2px; }
.bar span { height: 100%; display: flex; align-items: center; padding-top: 1px; border-right: 1.500px solid #8d8d8d; }
.bar span:last-child { border: 0; }
.b1 { width: 48px; justify-content: center; }
.b2 { width: 116px; padding-left: 17px; gap: 13px; }
.b3 { width: 141px; padding-left: 17px; gap: 12px; }
.b4 { padding-left: 16px; gap: 14px; }
.to { display: flex; font-size: 16.950px; line-height: 25px; color: #3b3b3b; }
.lbl { width: 34px; color: #666; }
.rcpts > div { display: flex; align-items: center; }
.rcpts svg { width: 16px; height: 16px; margin-right: 3px; margin-top: -2px; }
.rcpts span { margin-right: 5px; }
.rcpts b { color: #111; font-size: 16.700px; }
.to time { margin-left: auto; font-size: 17.500px; color: #666; }
.bodywrap { display: flex; justify-content: space-between; padding-right: 6px; height: 515px; }
.msg { width: 1223px; font-size: 20.520px; line-height: 30.500px; color: #424242; }
.cut { height: 7px; margin-left: 98px; padding-left: 33px; overflow: hidden; background: #fafafa; line-height: 30px; margin-top: 1px; }
.cut span { display: block; margin-top: -21px; }
.shade { margin-top: 24px; height: 244px; padding-top: 2px; background: #fafafa; }
.ml { font-weight: 700; height: 55px; letter-spacing: .08px; }
.lk { height: 117px; font-size: 20.640px; line-height: 30.500px; }
.lk a, .sig a { color: #467886; text-decoration: underline; text-decoration-thickness: 1px; text-underline-offset: 3px; }
.l1 { letter-spacing: .04px; }
.l3 { letter-spacing: .18px; }
.pl { height: 41px; }
.sig { margin-top: 57px; font-family: Roboto, "Open Sans", sans-serif; font-size: 20.700px; line-height: 28px; color: #111; letter-spacing: .08px; word-spacing: .6px; }
.logo { width: 190px; height: 38px; margin: 17px 0 0 3px; }
.cog { font: 400 31px Lato, "Open Sans", sans-serif; fill: #0c0c4a; stroke: #0c0c4a; stroke-width: .7px; }
.s-msg { width: 26px; height: 514px; padding-top: 8px; }
.s-msg i { width: 12px; height: 144px; margin: 312px 0 22px; }

/* status bar */
.status { height: 34px; flex: none; background: #f4f4f4; border-bottom: 2px solid #adb0bd; display: flex; align-items: center; font-size: 14.700px; color: #333; }
.st-items { width: 99px; margin-left: 17px; }
.st-bell { width: 23px; height: 22px; margin-right: 3px; }
.status .st-all { margin-left: auto; width: 200px; }
.st-conn { width: 260px; }
.st-view { width: 60px; height: 32px; background: #e0e0e0; display: flex; align-items: center; justify-content: center; }
.st-book { width: 21px; height: 20px; margin-left: 19px; }
.st-zoom { width: 190px; height: 20px; margin: 0 16px 0 28px; }
.status > span:last-child { width: 51px; }

/* taskbar */
.taskbar { height: 70px; flex: none; display: flex; align-items: center; padding-bottom: 2px; background: linear-gradient(90deg, #d7dbed, #d6dbec 25%, #d3dcec 30%, #d9d8e9 42%, #d9d8ea); font-size: 17.500px; }
.k-start { width: 35px; height: 35px; margin-left: 576px; }
.k-search { width: 327px; height: 46px; margin-left: 22px; border-radius: 23px; background: #f3f3f9; box-shadow: 0 0 0 1px #c8c9dd, 0 1px 1px 1px #b5b6c6; display: flex; align-items: center; padding-left: 16px; gap: 17px; font-size: 18.700px; color: #555; }
.k-search span { margin-top: -1px; }
.k-search svg { width: 21px; height: 22px; }
.k-view { width: 36px; height: 34px; margin-left: 18px; }
.k-teams { width: 44px; height: 42px; margin: -8px 0 0 31px; }
.k-tile { width: 50px; height: 58px; margin-left: 12px; border-radius: 6px; background: #ecebf4; box-shadow: 0 0 0 1px #d0cfe0, 5px 0 0 -1px #e6e5f0, 5px 0 0 0 #c9c8da; display: flex; flex-direction: column; align-items: center; padding-top: 12px; }
.k-tile svg { width: 36px; height: 34px; }
.k-tile i { width: 24px; height: 5px; margin-top: 7px; border-radius: 3px; background: #0078d4; }
.k-files { width: 36px; height: 34px; margin-left: 26px; }
.k-edge { margin-left: 30px; height: 48px; margin-top: 12px; display: flex; flex-direction: column; align-items: center; }
.k-edge svg { width: 36px; height: 36px; }
.k-edge i { width: 9px; height: 5px; margin-top: 6px; border-radius: 3px; background: #858590; }
.k-store { width: 35px; height: 36px; margin-left: 30px; }
.k-up { width: 16px; height: 10px; margin-left: 195px; }
.k-cloud { width: 25px; height: 17px; margin-left: 28px; }
.k-lang { width: 40px; margin: -2px 0 0 24px; text-align: center; font-size: 16.500px; line-height: 23px; }
.k-wifi { width: 24px; height: 18px; margin-left: 25px; }
.k-vol { width: 24px; height: 18px; margin-left: 12px; }
.k-bat { width: 24px; height: 16px; margin-left: 12px; }
.k-clock { margin: -2px 28px 0 auto; text-align: right; line-height: 24px; }
```
